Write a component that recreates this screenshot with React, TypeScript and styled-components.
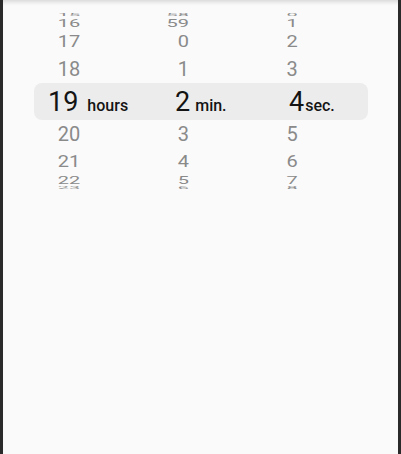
import React from 'react';
import styled, { createGlobalStyle } from 'styled-components';

const GlobalStyle = createGlobalStyle`
  html, body {
    margin: 0;
    padding: 0;
    background: #2a2a2a;
  }
  body {
    font-family: Roboto, 'Noto Sans', Arial, sans-serif;
  }
`;

const Frame = styled.div`
  box-sizing: border-box;
  height: 454px;
  margin: 0 3px;
  background: #fafafa;
  box-shadow: inset 0 5px 4px -3px rgba(0, 0, 0, 0.14);
  padding: 12px 30px 0 31px;
`;

const Picker = styled.div`
  display: flex;
  flex-direction: column;
`;

const Row = styled.div<{ $h: number; $selected?: boolean }>`
  display: grid;
  grid-template-columns: 120px 110px 104px;
  grid-template-rows: ${p => p.$h}px;
  height: ${p => p.$h}px;
  background: ${p => (p.$selected ? '#ececec' : 'transparent')};
  border-radius: ${p => (p.$selected ? '8px' : '0')};
`;

const Cell = styled.div`
  display: flex;
  align-items: center;
  height: 100%;
  min-height: 0;
`;

const Num = styled.span<{ $scale: number; $left: number; $width: number; $align: string }>`
  display: inline-block;
  box-sizing: border-box;
  margin-left: ${p => p.$left}px;
  width: ${p => p.$width}px;
  text-align: ${p => p.$align};
  font-size: 20px;
  line-height: 20px;
  color: #8a8a8a;
  transform: scaleY(${p => p.$scale});
  transform-origin: center;
`;

const Current = styled.div<{ $left: number }>`
  display: flex;
  align-items: baseline;
  margin-left: ${p => p.$left}px;
  color: #141414;
`;

const SelNum = styled.span`
  font-size: 27px;
  line-height: 30px;
`;

const Unit = styled.span<{ $gap: number }>`
  margin-left: ${p => p.$gap}px;
  font-size: 16px;
  font-weight: 500;
`;

type Column = {
  unit: string;
  values: number[];
  slotLeft: number;
  slotWidth: number;
  align: 'center' | 'right';
  selLeft: number;
  unitGap: number;
};

const columns: Column[] = [
  { unit: 'hours', values: [15, 16, 17, 18, 19, 20, 21, 22, 23], slotLeft: 14, slotWidth: 42, align: 'center', selLeft: 14, unitGap: 9 },
  { unit: 'min.', values: [58, 59, 0, 1, 2, 3, 4, 5, 6], slotLeft: 0, slotWidth: 35, align: 'right', selLeft: 21, unitGap: 5 },
  { unit: 'sec.', values: [0, 1, 2, 3, 4, 5, 6, 7, 8], slotLeft: 8, slotWidth: 40, align: 'center', selLeft: 25, unitGap: 1 },
];

// wheel rows, top to bottom: height of the row and how flat the digits get
const rows = [
  { h: 6, scale: 0.15 },
  { h: 10, scale: 0.5 },
  { h: 26, scale: 0.85 },
  { h: 29, scale: 1 },
  { h: 37, scale: 1, selected: true },
  { h: 28, scale: 1 },
  { h: 26, scale: 0.85 },
  { h: 12, scale: 0.5 },
  { h: 4, scale: 0.15 },
];

export default function App() {
  return (
    <>
      <GlobalStyle />
      <Frame>
        <Picker>
          {rows.map((r, i) => (
            <Row key={i} $h={r.h} $selected={r.selected}>
              {columns.map(c => (
                <Cell key={c.unit}>
                  {r.selected ? (
                    <Current $left={c.selLeft}>
                      <SelNum>{c.values[i]}</SelNum>
                      <Unit $gap={c.unitGap}>{c.unit}</Unit>
                    </Current>
                  ) : (
                    <Num $scale={r.scale} $left={c.slotLeft} $width={c.slotWidth} $align={c.align}>
                      {c.values[i]}
                    </Num>
                  )}
                </Cell>
              ))}
            </Row>
          ))}
        </Picker>
      </Frame>
    </>
  );
}
